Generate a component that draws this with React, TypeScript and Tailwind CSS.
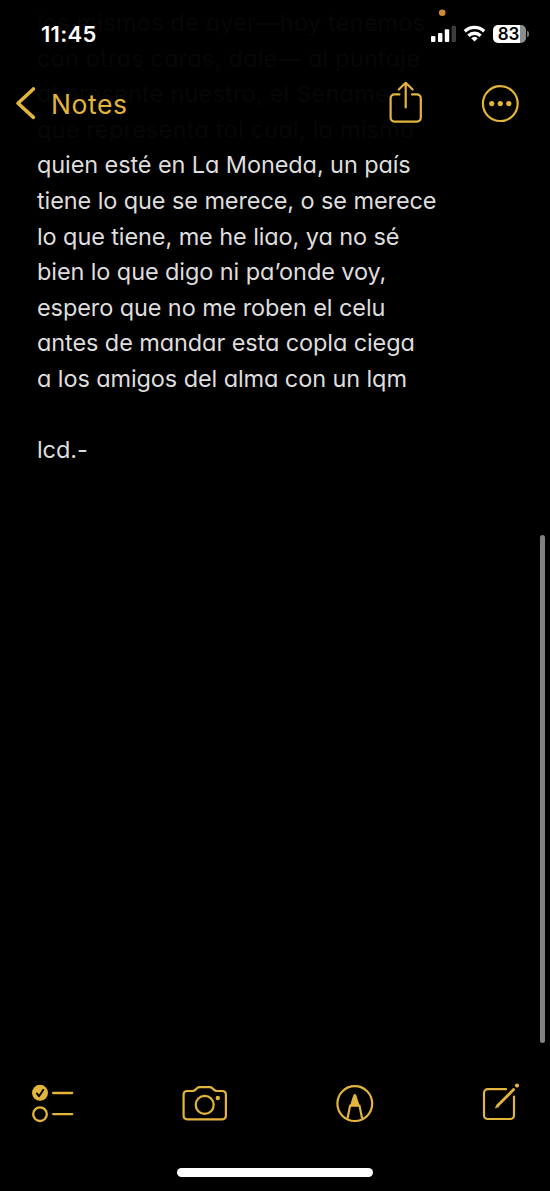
const FADED_LINES = [
  "los mismos de ayer—hoy tenemos",
  "con otras caras, dale— al puntaje",
  "al presente nuestro, el Sename",
  "que representa tal cual, la misma",
];

const LINES = [
  "quien esté en La Moneda, un país",
  "tiene lo que se merece, o se merece",
  "lo que tiene, me he liao, ya no sé",
  "bien lo que digo ni pa’onde voy,",
  "espero que no me roben el celu",
  "antes de mandar esta copla ciega",
  "a los amigos del alma con un lqm",
  "\u00a0",
  "lcd.-",
];

function StatusBar() {
  return (
    <div className="flex h-[68px] items-start justify-between pl-[41px] pr-[21px]">
      <div className="pt-[20px] text-[22px] font-semibold leading-[28px] tracking-[0.3px] text-white">11:45</div>
      <div className="flex items-start pt-[8px]">
        <svg width="62" height="38" viewBox="428 8 62 38" fill="#fff">
          <circle cx="442.2" cy="12.8" r="3.3" fill="#cf8a36" />
          <rect x="431" y="36" width="4.4" height="6" rx="1" />
          <rect x="438" y="33" width="4.4" height="9" rx="1" />
          <rect x="444.8" y="29.2" width="4.4" height="12.8" rx="1" />
          <rect x="451.6" y="26" width="4.4" height="16" rx="1" fill="#3c3c3c" />
          <g fill="none" stroke="#fff" strokeWidth="3.3">
            <path d="M464.800 31.200a14 14 0 0 1 19.400 0" />
            <path d="M468.400 35.700a8.800 8.800 0 0 1 12.200 0" />
          </g>
          <path d="M471.200 38.200a4.800 4.800 0 0 1 6.600 0l-3.300 3.400z" />
        </svg>
        <div className="mt-[17px] flex items-center gap-[1px] pl-[3px]">
          <div className="flex h-[18px] w-[33px] overflow-hidden rounded-[5px] bg-[linear-gradient(to_right,#fff_27px,#8c8c8c_27px)]">
            <span className="w-[31px] text-center text-[17px] font-semibold leading-[18px] text-black">83</span>
          </div>
          <div className="h-[6px] w-[2px] rounded-r-full bg-[#777]" />
        </div>
      </div>
    </div>
  );
}

function NavBar() {
  return (
    <div className="flex h-[72px] items-center justify-between pl-[15px] pr-[28px] text-[#e3b53c]">
      <div className="flex items-center">
        <svg width="36" height="40" viewBox="15 84 36 40" fill="none" stroke="currentColor" strokeWidth="3.6" strokeLinecap="round" strokeLinejoin="round">
          <path d="M33.4 89 18 103.2l15.4 14.2" />
        </svg>
        <span className="text-[26.5px] leading-[32px] tracking-[0.6px]">Notes</span>
      </div>
      <svg width="136" height="48" viewBox="386 80 136 48" fill="none" stroke="currentColor" strokeWidth="2.2" strokeLinecap="round" strokeLinejoin="round">
        <path d="M399.4 94.4h-5a3.8 3.8 0 0 0-3.8 3.8v19.6a3.8 3.8 0 0 0 3.8 3.8h22.6a3.8 3.8 0 0 0 3.8-3.8V98.2a3.8 3.8 0 0 0-3.8-3.8h-5M405.7 107.5V83.2M398.8 89.5l6.900-6.700 6.900 6.700" />
        <circle cx="500.3" cy="103.600" r="17.400" />
        <g fill="currentColor" stroke="none">
          <circle cx="491.700" cy="103.600" r="2.600" />
          <circle cx="500.300" cy="103.600" r="2.600" />
          <circle cx="508.800" cy="103.600" r="2.600" />
        </g>
      </svg>
    </div>
  );
}

function Toolbar() {
  return (
    <div className="flex items-center justify-between pl-[30px] pr-[28px] text-[#e3b53c]">
      <svg width="46" height="44" viewBox="30 1082 46 44" fill="none" stroke="currentColor" strokeWidth="2.3" strokeLinecap="round" strokeLinejoin="round">
        <circle cx="40" cy="1092.8" r="8" fill="currentColor" stroke="none" />
        <path d="m36.8 1093.4 2.2 2.8 4.3-6.3" stroke="#000" strokeWidth="1.9" />
        <circle cx="40" cy="1114.2" r="6.8" />
        <path d="M53.2 1093h19M53.2 1114.2h19" />
      </svg>
      <svg width="50" height="44" viewBox="180 1082 50 44" fill="none" stroke="currentColor" strokeWidth="2.2" strokeLinejoin="round">
        <path d="M187.3 1091h5.4c1.2 0 1.8-.3 2.6-1.1l1.7-1.7c.8-.8 1.5-1.1 2.7-1.1h10c1.2 0 1.9.3 2.7 1.1l1.7 1.7c.8.8 1.4 1.1 2.6 1.1h5.5c2.4 0 3.7 1.3 3.7 3.7v20.9c0 2.4-1.3 3.7-3.7 3.7h-34.9c-2.4 0-3.7-1.3-3.7-3.7v-20.9c0-2.4 1.3-3.7 3.7-3.7z" />
        <circle cx="204.7" cy="1104.8" r="9" />
        <circle cx="217.8" cy="1098" r="2.2" fill="currentColor" stroke="none" />
      </svg>
      <svg width="42" height="44" viewBox="333.5 1082 42 44" fill="none" stroke="currentColor" strokeWidth="2.2" strokeLinejoin="round">
        <circle cx="354.3" cy="1103.6" r="17.4" />
        <path d="M347 1118.5l2.600-12.900h9.400l2.600 12.900" />
        <path d="M350 1105.600l3.300-10.400c.4-1.200 1.600-1.200 2 0l3.300 10.400z" fill="currentColor" strokeWidth="1" />
      </svg>
      <svg width="42" height="44" viewBox="480 1082 42 44" fill="none" stroke="currentColor" strokeWidth="2.2" strokeLinecap="round" strokeLinejoin="round">
        <path d="M506 1089.2h-18.2a3.8 3.8 0 0 0-3.8 3.8v22.2a3.8 3.8 0 0 0 3.8 3.8h22.4a3.8 3.8 0 0 0 3.8-3.8v-18.7" />
        <path d="M498.2 1105.1l15.4-15.5" strokeWidth="2.9" />
        <path d="M495.6 1107.7l1.2-2.8 1.7 1.6z" fill="currentColor" strokeWidth=".8" />
        <circle cx="517" cy="1085.6" r="2.100" fill="currentColor" stroke="none" />
      </svg>
    </div>
  );
}

export default function App() {
  return (
    <div className="grid h-[1191px] w-[550px] overflow-hidden bg-black font-['Inter','Liberation_Sans',sans-serif]">
      <div className="col-start-1 row-start-1 flex justify-between pl-[37px] pr-[5px]">
        <div className="flex flex-col pt-[5px] text-[23.5px] leading-[35.6px] tracking-[-0.1px] [font-feature-settings:'cv11']">
          {FADED_LINES.map((line) => (
            <div key={line} className="whitespace-nowrap tracking-[0.2px] text-[#070707]">
              {line}
            </div>
          ))}
          {LINES.map((line, i) => (
            <div key={i} className="whitespace-nowrap text-[#dedede]">
              {line}
            </div>
          ))}
        </div>
        <div className="mt-[535px] h-[508px] w-[5px] rounded-full bg-[#828282]" />
      </div>
      <div className="col-start-1 row-start-1 flex flex-col">
        <StatusBar />
        <NavBar />
        <div className="flex-1" />
        <Toolbar />
        <div className="flex h-[65px] justify-center pt-[42px]">
          <div className="h-[9px] w-[196px] rounded-full bg-white" />
        </div>
      </div>
    </div>
  );
}
